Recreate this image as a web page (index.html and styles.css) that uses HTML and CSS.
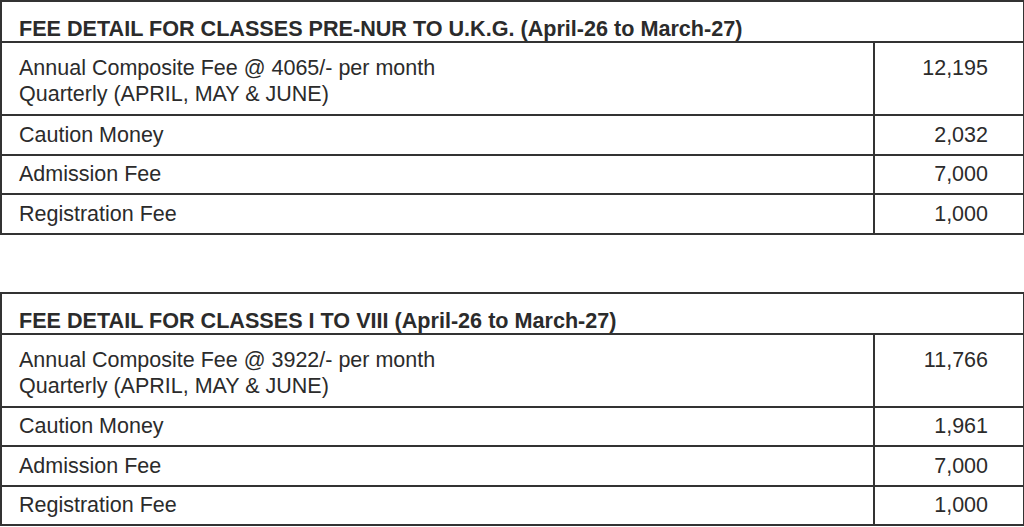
FILE: index.html
```html
<!DOCTYPE html>
<html>
<head>
<meta charset="utf-8">
<link rel="stylesheet" href="styles.css">
</head>
<body>
<div class="page">
  <table class="fee">
    <colgroup><col class="c-label"><col class="c-amt"></colgroup>
    <tr><th colspan="2">FEE DETAIL FOR CLASSES PRE-NUR TO U.K.G. (April-26 to March-27)</th></tr>
    <tr class="tall"><td>Annual Composite Fee @ 4065/- per month<br>Quarterly (APRIL, MAY &amp; JUNE)</td><td class="amt">12,195</td></tr>
    <tr><td>Caution Money</td><td class="amt">2,032</td></tr>
    <tr><td>Admission Fee</td><td class="amt">7,000</td></tr>
    <tr><td>Registration Fee</td><td class="amt">1,000</td></tr>
  </table>
  <table class="fee">
    <colgroup><col class="c-label"><col class="c-amt"></colgroup>
    <tr><th colspan="2">FEE DETAIL FOR CLASSES I TO VIII (April-26 to March-27)</th></tr>
    <tr class="tall"><td>Annual Composite Fee @ 3922/- per month<br>Quarterly (APRIL, MAY &amp; JUNE)</td><td class="amt">11,766</td></tr>
    <tr><td>Caution Money</td><td class="amt">1,961</td></tr>
    <tr><td>Admission Fee</td><td class="amt">7,000</td></tr>
    <tr><td>Registration Fee</td><td class="amt">1,000</td></tr>
  </table>
</div>
</body>
</html>
```
FILE: styles.css
```css
html, body {
  margin: 0;
  padding: 0;
  background: #ffffff;
}
.page {
  display: flex;
  flex-direction: column;
  gap: 57px;
  padding: 0;
}
.fee {
  width: 1023px;
  border-collapse: collapse;
  table-layout: fixed;
  font-family: "Liberation Sans", Arial, sans-serif;
  color: #2b2b2b;
}
.c-label { width: 873px; }
.c-amt { width: 150px; }
.fee th, .fee td {
  border: 2px solid #333333;
  padding: 0 0 0 17px;
}
.fee th {
  text-align: left;
  font-weight: bold;
  font-size: 21.6px;
  line-height: 24px;
  padding-top: 15px;
  padding-bottom: 0;
  height: 24px;
}
.fee td {
  font-size: 21.5px;
  line-height: 26px;
  height: 37.5px;
  vertical-align: middle;
}
.fee tr.tall td {
  vertical-align: top;
  padding-top: 12px;
  height: 59px;
}
.fee td.amt {
  text-align: right;
  padding-left: 0;
  padding-right: 35px;
  border-left-width: 1px;
}
```
